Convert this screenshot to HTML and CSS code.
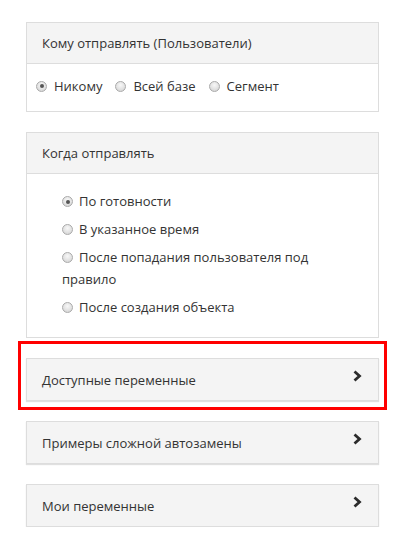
FILE: index.html
```html
<!DOCTYPE html>
<html lang="ru">
<head>
<meta charset="utf-8">
<link rel="stylesheet" href="styles.css">
</head>
<body>
<div class="page">
  <section class="panel">
    <div class="panel-head">Кому отправлять (Пользователи)</div>
    <div class="panel-body inline-opts">
      <label class="opt"><span class="radio checked"></span>Никому</label>
      <label class="opt"><span class="radio"></span>Всей базе</label>
      <label class="opt"><span class="radio"></span>Сегмент</label>
    </div>
  </section>

  <section class="panel">
    <div class="panel-head">Когда отправлять</div>
    <div class="panel-body list-opts">
      <div class="item"><span class="radio checked"></span>По готовности</div>
      <div class="item"><span class="radio"></span>В указанное время</div>
      <div class="item"><span class="radio"></span>После попадания пользователя под правило</div>
      <div class="item"><span class="radio"></span>После создания объекта</div>
    </div>
  </section>

  <div class="highlight">
    <section class="panel collapsed">
      <span>Доступные переменные</span>
      <svg class="chev" width="9" height="12" viewBox="0 0 9 12"><path d="M1.5 1.5 L6.5 6 L1.5 10.5" fill="none" stroke="#2b2b2b" stroke-width="2.8"/></svg>
    </section>
    <div class="frame"></div>
  </div>

  <section class="panel collapsed">
    <span>Примеры сложной автозамены</span>
    <svg class="chev" width="9" height="12" viewBox="0 0 9 12"><path d="M1.5 1.5 L6.5 6 L1.5 10.5" fill="none" stroke="#2b2b2b" stroke-width="2.8"/></svg>
  </section>

  <section class="panel collapsed">
    <span>Мои переменные</span>
    <svg class="chev" width="9" height="12" viewBox="0 0 9 12"><path d="M1.5 1.5 L6.5 6 L1.5 10.5" fill="none" stroke="#2b2b2b" stroke-width="2.8"/></svg>
  </section>
</div>
</body>
</html>
```

FILE: styles.css
```css
* { box-sizing: border-box; }
html, body { margin: 0; background: #fff; }
body {
  font-family: "Open Sans", "Liberation Sans", sans-serif;
  font-size: 13px;
  color: #333;
}
.page {
  width: 353px;
  margin-left: 26px;
  padding-top: 22px;
  display: flex;
  flex-direction: column;
  gap: 20px;
}
.panel {
  border: 1px solid #ddd;
  background: #fff;
}
.panel-head {
  height: 41px;
  background: #f4f4f4;
  border-bottom: 1px solid #ddd;
  padding: 0 15px;
  display: flex;
  align-items: center;
}
.inline-opts {
  height: 47px;
  padding: 0 9px 3px;
  display: flex;
  align-items: center;
  gap: 13px;
}
.opt { display: flex; align-items: center; }
.radio {
  display: inline-block;
  width: 11px;
  height: 11px;
  border-radius: 50%;
  border: 1px solid #aaa;
  background: radial-gradient(circle at 50% 35%, #f8f8f8 0, #e0e0e0 60%, #cccccc 100%);
  margin-right: 7px;
  position: relative;
  flex: none;
}
.radio.checked::after {
  content: "";
  position: absolute;
  left: 2.5px;
  top: 2.5px;
  width: 4px;
  height: 4px;
  border-radius: 50%;
  background: #555;
}
.list-opts {
  padding: 16px 35px 19px;
  display: flex;
  flex-direction: column;
  gap: 6px;
}
.item { line-height: 22px; }
.item .radio { vertical-align: -1px; margin-right: 6px; }
.collapsed {
  height: 43px;
  background: #f4f4f4;
  padding: 0 15px;
  display: flex;
  align-items: center;
  justify-content: space-between;
  box-shadow: 0 1px 1px rgba(0,0,0,0.12);
}
.chev { margin-top: -7px; margin-right: 1px; }
.highlight { position: relative; }
.frame {
  position: absolute;
  left: -8px;
  top: -17px;
  right: -8px;
  bottom: -9px;
  border: 3px solid #f00;
  pointer-events: none;
}
```
